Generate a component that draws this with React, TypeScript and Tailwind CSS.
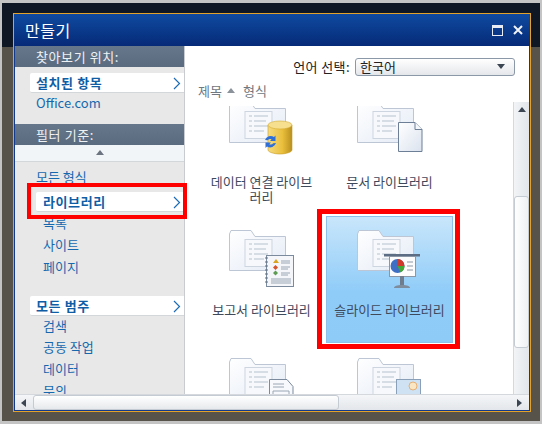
import { type FC, type ReactNode } from "react";

const fontStack = "font-['Noto_Sans_CJK_KR','Liberation_Sans',sans-serif]";

const Chevron: FC = () => (
	<svg width="8" height="13" viewBox="0 0 8 13" className="absolute right-[3px] top-[4px]">
		<path d="M1 1l5.5 5.5L1 12" fill="none" stroke="#1c6db5" strokeWidth="1.2" />
	</svg>
);

const NavHeader: FC<{ label: string }> = ({ label }) => (
	<div className="flex h-[21px] shrink-0 items-center bg-[linear-gradient(#66778b,#5a6b80)] pl-[21px] text-[13px] tracking-[0.6px] text-[#eef1f4]">
		{label}
	</div>
);

const NavSelected: FC<{ label: string; left: number }> = ({ label, left }) => (
	<div
		className={`relative flex h-[20px] items-center rounded-l-[2px] border-b border-[#d4d7da] bg-white text-[13px] font-bold tracking-[0.6px] text-[#0f5ea5] ${
			left === 15 ? "ml-[15px] pl-[6px]" : "ml-[21px] pl-[7px]"
		}`}
	>
		{label}
		<Chevron />
	</div>
);

const NavLink: FC<{ label: string; h?: string; pl?: string }> = ({
	label,
	h = "h-[22px]",
	pl = "pl-[28px]",
}) => (
	<div className={`flex shrink-0 items-center text-[13px] text-[#1668ae] ${h} ${pl}`}>{label}</div>
);

const Folder: FC = () => (
	<>
		<path
			d="M0.5 4V40.5H56.5V6.5H26L22 0.5H2Z"
			fill="url(#folderFill)"
			stroke="#bcc6d4"
			strokeWidth="1"
		/>
		<rect x="16" y="9.5" width="27" height="27" fill="#f6f8fb" stroke="#cdd5e0" />
		<path
			d="M20 14h3M25 14h14M20 19h3M25 19h12M20 24h3M25 24h14M20 29h3M25 29h10"
			stroke="#b8c2ce"
			strokeWidth="1"
		/>
	</>
);

const Database: FC = () => (
	<>
		<path d="M39 23v25c0 2 6 4 12 4s12-2 12-4V23Z" fill="url(#dbFill)" stroke="#c79b1f" strokeWidth=".6" />
		<ellipse cx="51" cy="23" rx="12" ry="4" fill="#f6df8e" stroke="#d5ac35" strokeWidth=".6" />
		<path d="M36 38a6 6 0 0 1 9-3l1.500-1.500V39h-5.500l1.700-1.700a3.500 3.500 0 0 0-4 1Z" fill="#2f6fd6" />
		<path d="M47 41a6 6 0 0 1-9 3.500l-1.500 1.500v-5.500h5.500l-1.700 1.700a3.500 3.500 0 0 0 4-1Z" fill="#2f6fd6" />
	</>
);

const Doc: FC = () => (
	<>
		<path d="M41.5 20.5H58l7 7v22H41.5Z" fill="url(#docFill)" stroke="#6d7f97" />
		<path d="M58 20.5v7h7" fill="#f4f7fb" stroke="#6d7f97" />
	</>
);

const Report: FC = () => (
	<>
		<rect x="37.5" y="25.5" width="27" height="31" fill="#f4f6f9" stroke="#7b8a9c" />
		<path
			d="M36 28h3M36 32h3M36 36h3M36 40h3M36 44h3M36 48h3M36 52h3"
			stroke="#5f6d7e"
			strokeWidth="1.2"
		/>
		<path d="M44 33l3-4 3 4Z" fill="#d9a520" />
		<path d="M44 37.5l2.500-2.500 2.500 2.500-2.500 2.500Z" fill="#d4552e" />
		<path d="M44 43l2.500-2.500L49 43l-2.500 2.500Z" fill="#5e9c54" />
		<path
			d="M52 31h9M52 33h9M52 37h9M52 39h7M52 43h9M52 45h7M42 49h20M42 51h20M42 53h20"
			stroke="#9aa6b4"
			strokeWidth="1"
		/>
	</>
);

const Projector: FC = () => (
	<>
		<rect x="27" y="24" width="36" height="2.500" fill="#5d6d83" />
		<rect x="32.500" y="26.500" width="26" height="20" fill="#fcfcfd" stroke="#8b97a6" />
		<circle cx="40.500" cy="36" r="7" fill="#3f6fc4" />
		<path d="M40.500 36V29a7 7 0 0 1 7 7Z" fill="#cf3a2a" />
		<path d="M40.500 36h7a7 7 0 0 1-4 6.300Z" fill="#43a832" />
		<path d="M50 32h6M50 36h6M50 40h6" stroke="#8d98a6" />
		<rect x="43" y="46" width="4" height="9" fill="#6e7c8e" />
		<path d="M37 58c0-2 3-3 8-3s8 1 8 3Z" fill="#7f8c9c" />
	</>
);

const Sheet: FC = () => (
	<>
		<path d="M40.500 21.500H58l6 7v20H40.500Z" fill="#f7f9fc" stroke="#7b8a9c" />
		<path d="M44 33h16v10H44Z" fill="none" stroke="#9aa6b4" />
		<path d="M44 26h11M44 29h11" stroke="#9aa6b4" />
	</>
);

const Picture: FC = () => (
	<>
		<rect x="39.500" y="21.500" width="24" height="26" fill="#cfe2f3" stroke="#8aa0b8" />
		<circle cx="56" cy="28" r="4" fill="#fbe6c4" stroke="#e5b077" />
		<path d="M31 48a9 7 0 0 1 18 0" fill="#dfe3e8" stroke="#7b8794" strokeWidth="2" />
		<circle cx="40" cy="46" r="3" fill="#4c5b6b" />
	</>
);

const LibraryIcon: FC<{ children: ReactNode; ml: string }> = ({ children, ml }) => (
	<svg width="70" height="60" viewBox="0 0 70 60" className={`block shrink-0 self-start ${ml}`}>
		<defs>
			<linearGradient id="folderFill" x1="0" x2="1" y1="0" y2="1">
				<stop offset="0" stopColor="#ffffff" />
				<stop offset="1" stopColor="#e4ebf6" />
			</linearGradient>
			<linearGradient id="dbFill" x1="0" x2="1" y1="0" y2="0">
				<stop offset="0" stopColor="#f5dc82" />
				<stop offset=".6" stopColor="#eabf3c" />
				<stop offset="1" stopColor="#b98f1e" />
			</linearGradient>
			<linearGradient id="docFill" x1="0" x2="1" y1="0" y2="1">
				<stop offset="0" stopColor="#ffffff" />
				<stop offset="1" stopColor="#dbe3ef" />
			</linearGradient>
		</defs>
		<Folder />
		{children}
	</svg>
);

const LibraryCell: FC<{ label?: string; selected?: boolean; children: ReactNode }> = ({
	label,
	selected,
	children,
}) => (
	<div
		className={`flex h-[127px] w-[127px] flex-col items-center ${
			selected
				? "border border-[#8cc0e8] bg-[linear-gradient(#c9e6fb,#8fccf8_60%,#8fcbf7)] pt-[13px]"
				: "pt-[14px]"
		}`}
	>
		<LibraryIcon ml={selected ? "ml-[30px]" : "ml-[31px]"}>{children}</LibraryIcon>
		{label && (
			<div
				className={`mt-[12px] w-full text-center text-[13px] leading-[15px] text-[#3e4a5c] ${
					selected ? "whitespace-nowrap" : "px-[10px]"
				}`}
			>
				{label}
			</div>
		)}
	</div>
);

const Triangle: FC<{ dir: "up" | "down" | "left" | "right"; color?: string }> = ({
	dir,
	color = "#3c4652",
}) => {
	const points = {
		up: "4,1 8,6 0,6",
		down: "0,1 8,1 4,6",
		left: "6,0 6,8 1,4",
		right: "1,0 1,8 6,4",
	}[dir];
	return (
		<svg width="8" height="8" viewBox="0 0 8 8" className="shrink-0">
			<polygon points={points} fill={color} />
		</svg>
	);
};

const App: FC = () => (
	<div
		className={`relative h-[424px] w-[542px] overflow-hidden border-x-2 border-t-[3px] border-b-[3px] border-[#c4c4c4] bg-[linear-gradient(#0f1724_0,#0f1724_44px,#57524a_44px)] pl-[11px] pt-[10px] ${fontStack}`}
	>
		<div className="flex h-[399px] w-[518px] flex-col border border-[#e3a32b] bg-[#123a8c]">
			{/* title bar */}
			<div className="flex h-[32px] shrink-0 items-center justify-between bg-[linear-gradient(#0f4aa0,#062a78)] pl-[11px] pr-[7px] text-[16px] tracking-[0.5px] text-white">
				<span>만들기</span>
				<div className="flex items-center gap-[10px]">
					<svg width="11" height="11" viewBox="0 0 11 11">
						<rect x=".5" y=".5" width="10" height="10" fill="none" stroke="#e8edf5" />
						<rect x="1" y="1" width="9" height="2" fill="#e8edf5" />
					</svg>
					<svg width="10" height="10" viewBox="0 0 10 10">
						<path d="M1 1l8 8M9 1l-8 8" stroke="#f0f3f8" strokeWidth="2" />
					</svg>
				</div>
			</div>

			<div className="mx-px mb-px flex min-h-0 flex-1 flex-col bg-white">
				<div className="flex min-h-0 flex-1">
					{/* left nav */}
					<div className="flex w-[170px] shrink-0 flex-col overflow-hidden border-r border-[#c8ccd0] bg-[#e8e8e8]">
						<NavHeader label="찾아보기 위치:" />
						<div className="mt-[6px]">
							<NavSelected label="설치된 항목" left={15} />
						</div>
						<NavLink label="Office.com" h="h-[20px]" pl="pl-[21px]" />
						<div className="h-[11px] shrink-0" />
						<NavHeader label="필터 기준:" />
						<div className="flex h-[17px] shrink-0 items-center justify-center border-b border-[#d4d7da] bg-[#f2f5f8]">
							<Triangle dir="up" color="#6b7480" />
						</div>
						<div className="h-[4px] shrink-0" />
						<NavLink label="모든 형식" pl="pl-[21px]" />
						<div className="mt-[4px]">
							<NavSelected label="라이브러리" left={21} />
						</div>
						<NavLink label="목록" />
						<NavLink label="사이트" />
						<NavLink label="페이지" />
						<div className="mt-[18px]">
							<NavSelected label="모든 범주" left={15} />
						</div>
						<NavLink label="검색" h="h-[20px]" />
						<NavLink label="공동 작업" />
						<NavLink label="데이터" />
						<NavLink label="문의" />
					</div>

					{/* right pane */}
					<div className="flex min-w-0 flex-1 flex-col">
						<div className="relative h-[56px] shrink-0">
							<div className="flex items-center justify-end gap-[5px] pr-[14px] pt-[11px] text-[13px] text-[#222]">
								<span className="tracking-[0.4px]">언어 선택:</span>
								<div className="flex h-[18px] w-[160px] items-center justify-between rounded-[3px] border border-[#8b98a8] bg-[linear-gradient(#ffffff,#e4e7ea)] pl-[4px] pr-[9px] leading-none">
									<span>한국어</span>
									<Triangle dir="down" />
								</div>
							</div>
							<div className="flex items-center gap-[5px] pl-[13px] pt-[5px] text-[13px] leading-[18px] text-[#6f7780]">
								<span>제목</span>
								<Triangle dir="up" color="#8b929a" />
								<span className="ml-[3px]">형식</span>
							</div>
						</div>
						<div className="flex min-h-0 flex-1">
							<div className="min-w-0 flex-1 pt-[4px]">
								<div className="h-full overflow-hidden pl-[13px]">
									<div className="mt-[-18px] grid grid-cols-[127px_127px] gap-x-px gap-y-px">
										<LibraryCell label="데이터 연결 라이브러리">
											<Database />
										</LibraryCell>
										<LibraryCell label="문서 라이브러리">
											<Doc />
										</LibraryCell>
										<LibraryCell label="보고서 라이브러리">
											<Report />
										</LibraryCell>
										<LibraryCell label="슬라이드 라이브러리" selected>
											<Projector />
										</LibraryCell>
										<LibraryCell>
											<Sheet />
										</LibraryCell>
										<LibraryCell>
											<Picture />
										</LibraryCell>
									</div>
								</div>
							</div>
							{/* vertical scrollbar */}
							<div className="flex w-[16px] shrink-0 flex-col items-center border-l border-[#d5d9de] bg-[linear-gradient(90deg,#f2f4f6,#e2e6ea)]">
								<div className="flex h-[16px] items-center">
									<Triangle dir="up" />
								</div>
								<div className="mt-[78px] h-[152px] w-[15px] rounded-[3px] border border-[#c5cbd2] bg-[linear-gradient(90deg,#ffffff,#eef0f2)]" />
							</div>
						</div>
					</div>
				</div>

				{/* horizontal scrollbar */}
				<div className="flex h-[16px] shrink-0 items-center border-t border-[#d5d9de] bg-[linear-gradient(#f4f6f8,#e3e6ea)] px-[5px]">
					<Triangle dir="left" />
					<div className="ml-[5px] h-[15px] w-[306px] rounded-[3px] border border-[#c5cbd2] bg-[linear-gradient(#ffffff,#e6e9ec)]" />
					<div className="flex-1" />
					<Triangle dir="right" />
				</div>
			</div>
		</div>

		{/* red annotation boxes */}
		<div className="absolute left-[25px] top-[180px] h-[36px] w-[160px] border-[4px] border-[#ff0000]" />
		<div className="absolute left-[315px] top-[206px] h-[140px] w-[143px] border-[5px] border-[#ff0000]" />
	</div>
);

export default App;
